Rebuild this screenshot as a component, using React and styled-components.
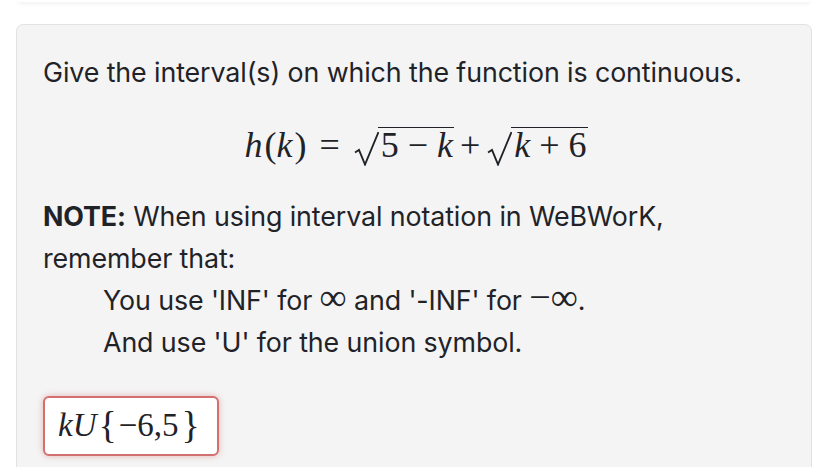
import React from "react";
import styled, { createGlobalStyle } from "styled-components";

const GlobalStyle = createGlobalStyle`
  html, body {
    margin: 0;
    padding: 0;
    background: #ffffff;
  }
  body {
    font-family: Inter, "Noto Sans", "Liberation Sans", sans-serif;
    color: #1f2328;
    overflow: hidden;
  }
`;

const Page = styled.div`
  width: 828px;
  height: 467px;
  overflow: hidden;
`;

const PrevCard = styled.div`
  height: 2px;
  margin: 0 18px;
  background: #ffffff;
  border-radius: 0 0 6px 6px;
  box-shadow: 0 1px 4px rgba(0, 0, 0, 0.12);
`;

const Problem = styled.div`
  margin: 22px 16px 0;
  padding: 26px 26px 40px;
  background: #f4f4f4;
  border: 1px solid #e2e2e2;
  border-radius: 7px;
`;

const Para = styled.p`
  margin: 0;
  font-size: 26.8px;
  line-height: 42px;
  letter-spacing: -0.1px;
  padding-left: ${(p) => (p.$indent ? "60px" : "0")};
`;

const MathBlock = styled.div`
  text-align: center;
  margin: 22px 0 20px;
  height: 60px;
  line-height: 60px;
  font-family: "Liberation Serif", "DejaVu Serif", serif;
  font-size: 36px;
  color: #1f2328;
  padding-left: 4px;
`;

const V = styled.i`
  font-style: italic;
  margin-right: ${(p) => p.$after || "0"};
`;

const Op = styled.span`
  margin: 0 ${(p) => p.$space || "9px"};
`;

const Sqrt = styled.span`
  display: inline-block;
  white-space: nowrap;
`;

const Radical = styled.svg`
  width: 26px;
  height: 35px;
  vertical-align: -9px;
`;

const Radicand = styled.span`
  display: inline-block;
  border-top: 1.8px solid #1f2328;
  padding: 0 1px 0 3px;
  line-height: 34px;
  margin-left: -1px;
`;

const Inline = styled.span`
  font-family: "Liberation Serif", "DejaVu Serif", serif;
  font-size: 38px;
  line-height: 0;
`;

const AnswerBox = styled.div`
  display: inline-flex;
  align-items: center;
  margin-top: 33px;
  width: 176px;
  height: 60px;
  box-sizing: border-box;
  padding: 0 0 2px 13px;
  background: #ffffff;
  border: 2px solid #d26f6f;
  border-radius: 6px;
  box-shadow: 0 0 6px rgba(210, 100, 100, 0.45);
  font-family: "Liberation Serif", "DejaVu Serif", serif;
  font-size: 33px;
  color: #1f2328;
  white-space: nowrap;
`;

const Brace = styled.span`
  font-size: 38px;
  margin: 0 ${(p) => p.$space || "2px"};
`;

const SqrtSign = () => (
  <Radical viewBox="0 0 26 35">
    <path d="M2 21.5 L6 19 L12 33.5 L25.5 1" fill="none" stroke="#1f2328" strokeWidth="1.9" strokeLinejoin="miter" />
  </Radical>
);

export default function App() {
  return (
    <Page>
      <GlobalStyle />
      <PrevCard />
      <Problem>
        <Para>Give the interval(s) on which the function is continuous.</Para>
        <MathBlock>
          <V $after="2px">h</V>(<V $after="2px">k</V>)
          <Op $space="13px">=</Op>
          <Sqrt>
            <SqrtSign />
            <Radicand>
              5<Op>−</Op><V>k</V>
            </Radicand>
          </Sqrt>
          <Op $space="6px">+</Op>
          <Sqrt>
            <SqrtSign />
            <Radicand>
              <V>k</V><Op>+</Op>6
            </Radicand>
          </Sqrt>
        </MathBlock>
        <Para>
          <b>NOTE:</b> When using interval notation in WeBWorK,
        </Para>
        <Para>remember that:</Para>
        <Para $indent>
          You use 'INF' for <Inline>∞</Inline> and '-INF' for <Inline>−∞</Inline>.
        </Para>
        <Para $indent>And use 'U' for the union symbol.</Para>
        <AnswerBox>
          <V>kU</V>
          <Brace>{"{"}</Brace>−6,5<Brace $space="3px">{"}"}</Brace>
        </AnswerBox>
      </Problem>
    </Page>
  );
}
